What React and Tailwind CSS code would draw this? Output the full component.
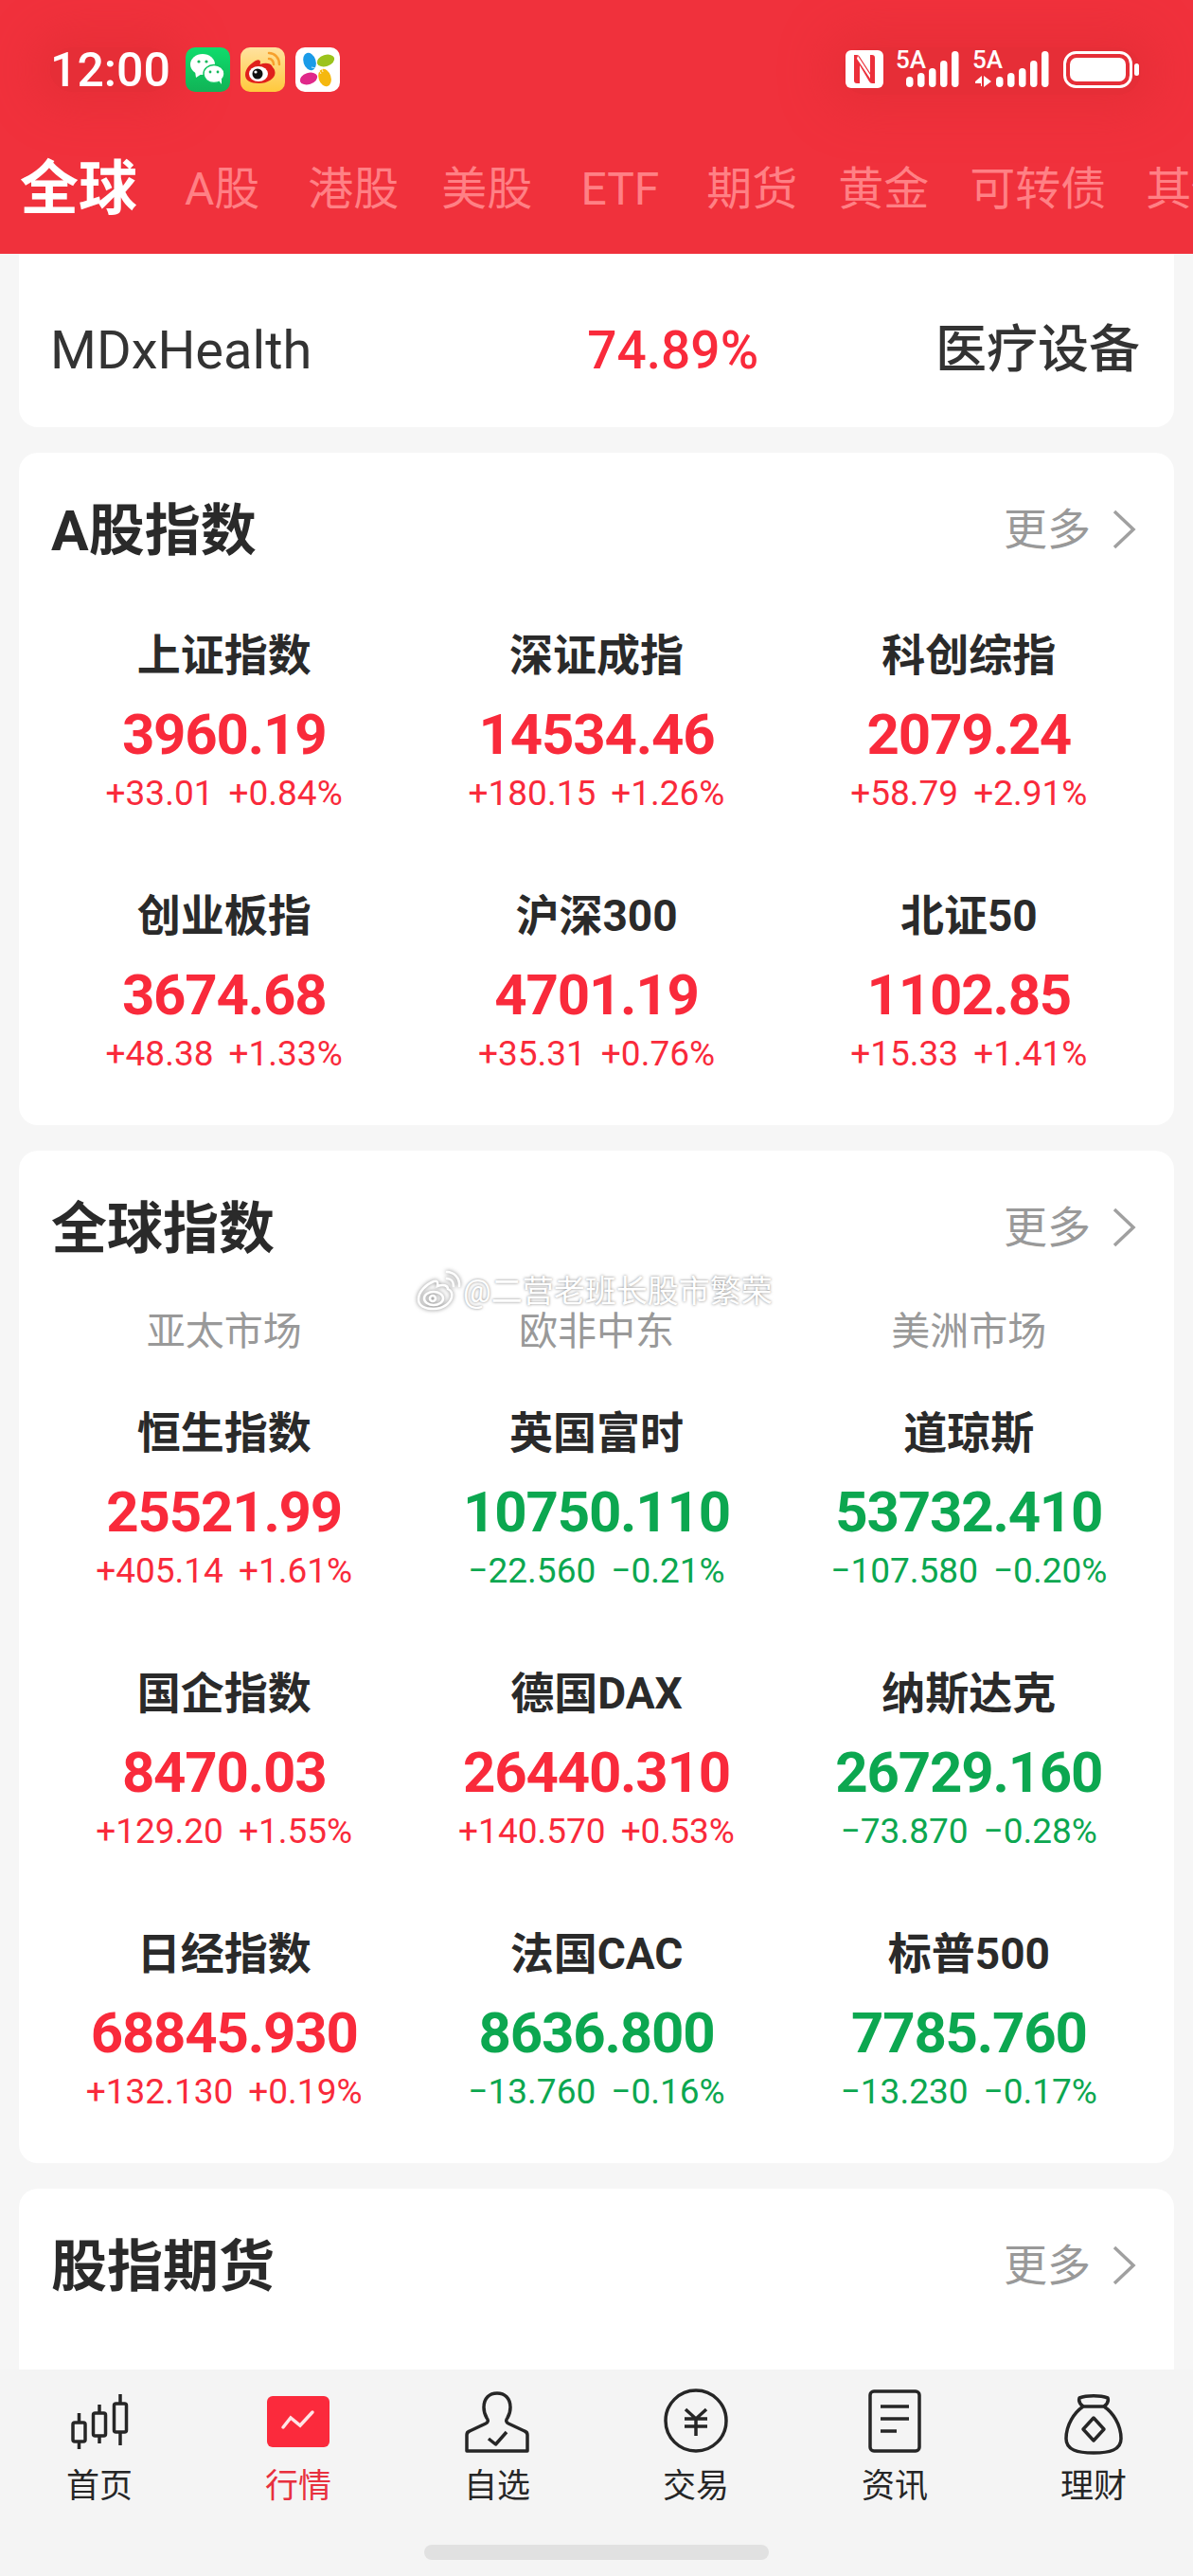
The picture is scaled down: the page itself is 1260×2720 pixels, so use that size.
const tabs = [
  { label: 'A股', gap: 'ml-[50px]' },
  { label: '港股', gap: 'ml-[51px]' },
  { label: '美股', gap: 'ml-[45px]' },
  { label: 'ETF', gap: 'ml-[51px]' },
  { label: '期货', gap: 'ml-[50px]' },
  { label: '黄金', gap: 'ml-[43px]' },
  { label: '可转债', gap: 'ml-[43px]' },
  { label: '其他', gap: 'ml-[42px]' },
]

const aIndex = [
  { name: '上证指数', value: '3960.19', delta: '+33.01', pct: '+0.84%', up: true },
  { name: '深证成指', value: '14534.46', delta: '+180.15', pct: '+1.26%', up: true },
  { name: '科创综指', value: '2079.24', delta: '+58.79', pct: '+2.91%', up: true },
  { name: '创业板指', value: '3674.68', delta: '+48.38', pct: '+1.33%', up: true },
  { name: '沪深300', value: '4701.19', delta: '+35.31', pct: '+0.76%', up: true },
  { name: '北证50', value: '1102.85', delta: '+15.33', pct: '+1.41%', up: true },
]

const globalIndex = [
  { name: '恒生指数', value: '25521.99', delta: '+405.14', pct: '+1.61%', up: true },
  { name: '英国富时', value: '10750.110', delta: '−22.560', pct: '−0.21%', up: false },
  { name: '道琼斯', value: '53732.410', delta: '−107.580', pct: '−0.20%', up: false },
  { name: '国企指数', value: '8470.03', delta: '+129.20', pct: '+1.55%', up: true },
  { name: '德国DAX', value: '26440.310', delta: '+140.570', pct: '+0.53%', up: true },
  { name: '纳斯达克', value: '26729.160', delta: '−73.870', pct: '−0.28%', up: false },
  { name: '日经指数', value: '68845.930', delta: '+132.130', pct: '+0.19%', up: true },
  { name: '法国CAC', value: '8636.800', delta: '−13.760', pct: '−0.16%', up: false },
  { name: '标普500', value: '7785.760', delta: '−13.230', pct: '−0.17%', up: false },
]

function AppIcons() {
  return (
    <div className="flex gap-[11px] ml-[16px]">
      {/* wechat */}
      <svg width="47" height="47" viewBox="0 0 47 47">
        <defs>
          <linearGradient id="wx" x1="0" y1="0" x2="0" y2="1">
            <stop offset="0" stopColor="#0fdc6c" />
            <stop offset="1" stopColor="#11b356" />
          </linearGradient>
        </defs>
        <rect width="47" height="47" rx="10" fill="url(#wx)" />
        <ellipse cx="18" cy="18" rx="13" ry="11" fill="#fff" />
        <path d="M10 25l1 7 6-4z" fill="#fff" />
        <ellipse cx="30" cy="28" rx="11" ry="9.5" fill="#fff" stroke="#11c460" strokeWidth="1.5" />
        <path d="M35 35l3 4 0-6z" fill="#fff" />
        <circle cx="14" cy="15" r="1.6" fill="#12b85a" />
        <circle cx="22" cy="15" r="1.6" fill="#12b85a" />
        <circle cx="26" cy="26" r="1.4" fill="#12b85a" />
        <circle cx="34" cy="26" r="1.4" fill="#12b85a" />
      </svg>
      {/* weibo */}
      <svg width="47" height="47" viewBox="0 0 47 47">
        <defs>
          <linearGradient id="wb" x1="0" y1="0" x2="0" y2="1">
            <stop offset="0" stopColor="#ffe2a0" />
            <stop offset="1" stopColor="#ffc93c" />
          </linearGradient>
        </defs>
        <rect width="47" height="47" rx="10" fill="url(#wb)" />
        <path d="M5 29c0-7 6-12 11-15 3-1.500 5-1 5 2l-.5 2c5-2 11-2 13 2 1 2 3 3 3 7 0 6-8 11-17 11S5 35 5 29z" fill="#e0201c" />
        <ellipse cx="19" cy="28" rx="10" ry="8" fill="#fff" />
        <circle cx="18" cy="28" r="5.500" fill="#111" />
        <circle cx="16" cy="26" r="1.600" fill="#fff" />
        <path d="M30 6c6 0 11 5 11 12M30 12c3 0 5 3 5 6" fill="none" stroke="#f7a02c" strokeWidth="2.500" strokeLinecap="round" />
      </svg>
      {/* ezviz style app */}
      <svg width="47" height="47" viewBox="0 0 47 47">
        <rect width="47" height="47" rx="10" fill="#fff" />
        <ellipse cx="15" cy="15" rx="6.500" ry="9.500" transform="rotate(-18 15 15)" fill="#1a9be8" />
        <ellipse cx="32" cy="14" rx="9.500" ry="6" transform="rotate(-18 32 14)" fill="#9bc31c" />
        <ellipse cx="14" cy="33" rx="9.500" ry="6" transform="rotate(-18 14 33)" fill="#e0288a" />
        <ellipse cx="31" cy="32" rx="6.500" ry="9.500" transform="rotate(-18 31 32)" fill="#f5b80f" />
        <path d="M17 21c4 1 8 2 10 7M22 18c3 2 6 3 7 8" fill="none" stroke="#fff" strokeWidth="1" opacity="0.8" />
      </svg>
    </div>
  )
}

function SignalBars({ x }) {
  const tops = [32, 28, 23, 15, 5]
  return tops.map((t, i) => (
    <rect key={i} x={x + i * 12} y={t} width="7.500" height={43 - t} rx="3.700" fill="#fff" />
  ))
}

function StatusRight() {
  return (
    <svg width="315" height="50" viewBox="0 0 315 50" className="mt-[-1px]">
      {/* NFC */}
      <rect x="3" y="4" width="40" height="40" rx="6" fill="#fff" />
      <path d="M12 9h3q2 0 3 2l11 17V9h2q3 0 3 3v27h-3q-2 0-3-2L18 20v19h-3q-3 0-3-3z" fill="#ec2f3a" />
      <path d="M16 10l13 20v4L15 13z" fill="#fff" />
      {/* 5A 5A */}
      <text x="56" y="23" fontFamily="Roboto, sans-serif" fontSize="26" fontWeight="500" fill="#fff">5A</text>
      <SignalBars x={67} />
      <text x="137" y="23" fontFamily="Roboto, sans-serif" fontSize="26" fontWeight="500" fill="#fff">5A</text>
      <path d="M140 37l7-6v11h-1v-3h-6zM149 31l8 6-8 6z" fill="#fff" />
      <SignalBars x={162} />
      {/* battery */}
      <rect x="234.500" y="6.500" width="70" height="36" rx="12" fill="none" stroke="#fff" strokeWidth="3" />
      <rect x="240" y="12" width="59" height="25" rx="7" fill="#fff" />
      <rect x="308" y="18" width="5" height="13" rx="2.500" fill="#fff" />
    </svg>
  )
}

function More() {
  return (
    <div className="flex items-center text-[#999] text-[46px] leading-none">
      更多
      <svg width="26" height="42" viewBox="0 0 26 42" fill="none" stroke="#a0a0a0" strokeWidth="3.500" className="ml-[22px] mr-[1px]">
        <path d="M3 2l20 19L3 40" />
      </svg>
    </div>
  )
}

function CardTitle({ title }) {
  return (
    <div className="flex items-center justify-between h-[80px] px-[34px] pr-[39px]">
      <h2 className="text-[59px] leading-none pt-[2px] font-bold text-[#2a2a2a]">{title}</h2>
      <More />
    </div>
  )
}

function IndexCell({ item }) {
  const color = item.up ? 'text-[#f92a3b]' : 'text-[#0ca750]'
  return (
    <div className="flex flex-col items-center">
      <div className="h-[56px] leading-[57px] text-[46px] font-bold text-[#2a2a2a] whitespace-nowrap">{item.name}</div>
      <div className={`mt-[21px] h-[70px] leading-[70px] text-[60px] tracking-[-0.02em] font-bold whitespace-nowrap ${color}`}>{item.value}</div>
      <div className={`mt-[4px] h-[46px] leading-[46px] text-[37px] whitespace-nowrap flex gap-[16px] ${color}`}>
        <span>{item.delta}</span>
        <span>{item.pct}</span>
      </div>
    </div>
  )
}

function IndexGrid({ items }) {
  return (
    <div className="grid grid-cols-3 gap-y-[78px] px-[20px]">
      {items.map((item) => (
        <IndexCell key={item.name} item={item} />
      ))}
    </div>
  )
}

function Watermark() {
  return (
    <div className="absolute left-[439px] top-[1072px] flex items-center text-white text-[33px] leading-none whitespace-nowrap [text-shadow:0_0_3px_rgba(0,0,0,0.5)]">
      <svg width="50" height="46" viewBox="0 0 50 46" fill="none" stroke="#fff" strokeWidth="2.500" className="drop-shadow-[0_0_2px_rgba(0,0,0,0.5)]">
        <path d="M3 32c0-8 8-16 16-19 4-1 5 1 4 5 6-2 11-1 11 3 4 2 5 5 4 9-2 7-10 12-19 12C10 42 3 39 3 32z" />
        <ellipse cx="19" cy="31" rx="10" ry="7" />
        <circle cx="18" cy="31" r="3" />
        <path d="M33 3c7 0 14 6 13 15M33 10c4 0 7 3 7 8" strokeLinecap="round" />
      </svg>
      <span>@二营老班长股市繁荣</span>
    </div>
  )
}

const strokeProps = { fill: 'none', stroke: '#262626', strokeWidth: 3.5 }

function NavIcon({ name }) {
  if (name === 'home') {
    return (
      <svg width="70" height="70" viewBox="0 0 70 70" {...strokeProps} className="overflow-visible">
        <rect x="7" y="38" width="13" height="20" rx="2" />
        <path d="M13.500 28v10M13.500 58v8" />
        <rect x="28.500" y="28" width="13" height="24" rx="2" />
        <path d="M35 19v9M35 52v8" />
        <rect x="50.500" y="18" width="13" height="30" rx="2" />
        <path d="M57 8v10M57 48v14" />
      </svg>
    )
  }
  if (name === 'market') {
    return (
      <svg width="70" height="70" viewBox="0 0 70 70" className="overflow-visible">
        <rect x="2" y="10" width="66" height="54" rx="6" fill="#fb2a3c" />
        <path d="M19 43l8-10 10 8 13-14" fill="none" stroke="#ffe4e6" strokeWidth="3.500" strokeLinecap="round" />
      </svg>
    )
  }
  if (name === 'watch') {
    return (
      <svg width="70" height="70" viewBox="0 0 70 70" {...strokeProps} strokeLinejoin="round" className="overflow-visible">
        <path d="M3 68V51q0-3 3-4l17-8q4-2 1-6q-3-5-3-11C21 12 27 7 35 7s14 5 14 15q0 6-3 11q-3 4 1 6l17 8q3 1 3 4v17z" />
        <path d="M26 55l7.500 6L45 48" />
      </svg>
    )
  }
  if (name === 'trade') {
    return (
      <svg width="70" height="70" viewBox="0 0 70 70" {...strokeProps} className="overflow-visible">
        <ellipse cx="35" cy="36" rx="32" ry="32" />
        <path d="M24 24l11 10 11-10M23 34h24M23 42h24M35 34v18" />
      </svg>
    )
  }
  if (name === 'news') {
    return (
      <svg width="70" height="70" viewBox="0 0 70 70" {...strokeProps} className="overflow-visible">
        <rect x="9" y="5" width="52" height="63" rx="4" />
        <path d="M20 21h30M20 34h30M20 47h17" />
      </svg>
    )
  }
  return (
    <svg width="70" height="70" viewBox="0 0 70 70" {...strokeProps} strokeLinejoin="round" className="overflow-visible">
      <path d="M24 21c-4-3-5-6-4-9 8-3 22-3 30 0 1 3 0 6-4 9" />
      <path d="M24 21h22c9 6 18 19 18 34 0 12-12 15-29 15S6 67 6 55c0-15 9-28 18-34z" />
      <path d="M35 33l11 12-11 12-11-12z" />
    </svg>
  )
}

const navItems = [
  { id: 'home', label: '首页' },
  { id: 'market', label: '行情', active: true },
  { id: 'watch', label: '自选' },
  { id: 'trade', label: '交易' },
  { id: 'news', label: '资讯' },
  { id: 'finance', label: '理财' },
]

export default function App() {
  return (
    <div className="relative w-[1260px] h-[2720px] overflow-hidden flex flex-col bg-[#f6f6f6] font-['Roboto','Noto_Sans_CJK_SC',sans-serif]">
      {/* red header */}
      <header className="h-[268px] shrink-0 bg-[#f0313c] overflow-hidden">
        <div className="flex items-start justify-between pt-[50px] pl-[53px] pr-[55px] h-[97px]">
          <div className="flex items-center h-[47px] rounded-full bg-[#e62e37] shadow-[0_0_40px_20px_#e82f38]">
            <span className="text-[50px] leading-none font-medium text-white">12:00</span>
          </div>
          <div className="mr-auto flex items-center h-[47px]">
            <AppIcons />
          </div>
          <div className="h-[50px] rounded-full bg-[#e62e37] shadow-[0_0_44px_20px_#e82f38]">
            <StatusRight />
          </div>
        </div>
        <nav className="mt-[71px] flex items-center pl-[21px] h-[64px] whitespace-nowrap">
          <span className="text-[62px] leading-none font-bold text-white">全球</span>
          {tabs.map((t) => (
            <span key={t.label} className={`text-[48px] leading-none text-[#ff8085] ${t.gap}`}>{t.label}</span>
          ))}
        </nav>
      </header>

      {/* scrolling list */}
      <main className="relative flex-1 min-h-0 overflow-hidden px-[20px] flex flex-col gap-[27px]">
        <section className="shrink-0 h-[183px] pt-[21px] pl-[33px] pr-[36px] bg-white rounded-b-[20px] flex items-center">
          <span className="text-[56px] leading-none text-[#333]">MDxHealth</span>
          <span className="ml-[291px] text-[55px] leading-none font-medium text-[#f92a3b]">74.89%</span>
          <span className="ml-auto text-[54px] leading-none font-medium text-[#333]">医疗设备</span>
        </section>

        <section className="shrink-0 h-[710px] pt-[41px] bg-white rounded-[20px]">
          <CardTitle title="A股指数" />
          <div className="mt-[65px]">
            <IndexGrid items={aIndex} />
          </div>
        </section>

        <section className="shrink-0 h-[1069px] pt-[41px] bg-white rounded-[20px]">
          <CardTitle title="全球指数" />
          <div className="mt-[45px] grid grid-cols-3 px-[20px] text-[41px] leading-[50px] text-[#999] text-center">
            <span>亚太市场</span>
            <span>欧非中东</span>
            <span>美洲市场</span>
          </div>
          <div className="mt-[54px]">
            <IndexGrid items={globalIndex} />
          </div>
        </section>

        <section className="shrink-0 h-[300px] pt-[41px] bg-white rounded-t-[20px]">
          <CardTitle title="股指期货" />
        </section>

        <Watermark />
      </main>

      {/* bottom tabs */}
      <footer className="shrink-0 h-[218px] pt-[18px] bg-[#f4f4f4] flex flex-col">
        <div className="grid grid-cols-6">
          {navItems.map((item) => (
            <div key={item.id} className="flex flex-col items-center">
              <NavIcon name={item.id} />
              <span className={`mt-[18px] text-[35px] leading-[36px] ${item.active ? 'text-[#e8303e]' : 'text-[#262626]'}`}>
                {item.label}
              </span>
            </div>
          ))}
        </div>
        <div className="mt-[43px] self-center w-[364px] h-[16px] rounded-full bg-[#e1e1e1]" />
      </footer>
    </div>
  )
}
